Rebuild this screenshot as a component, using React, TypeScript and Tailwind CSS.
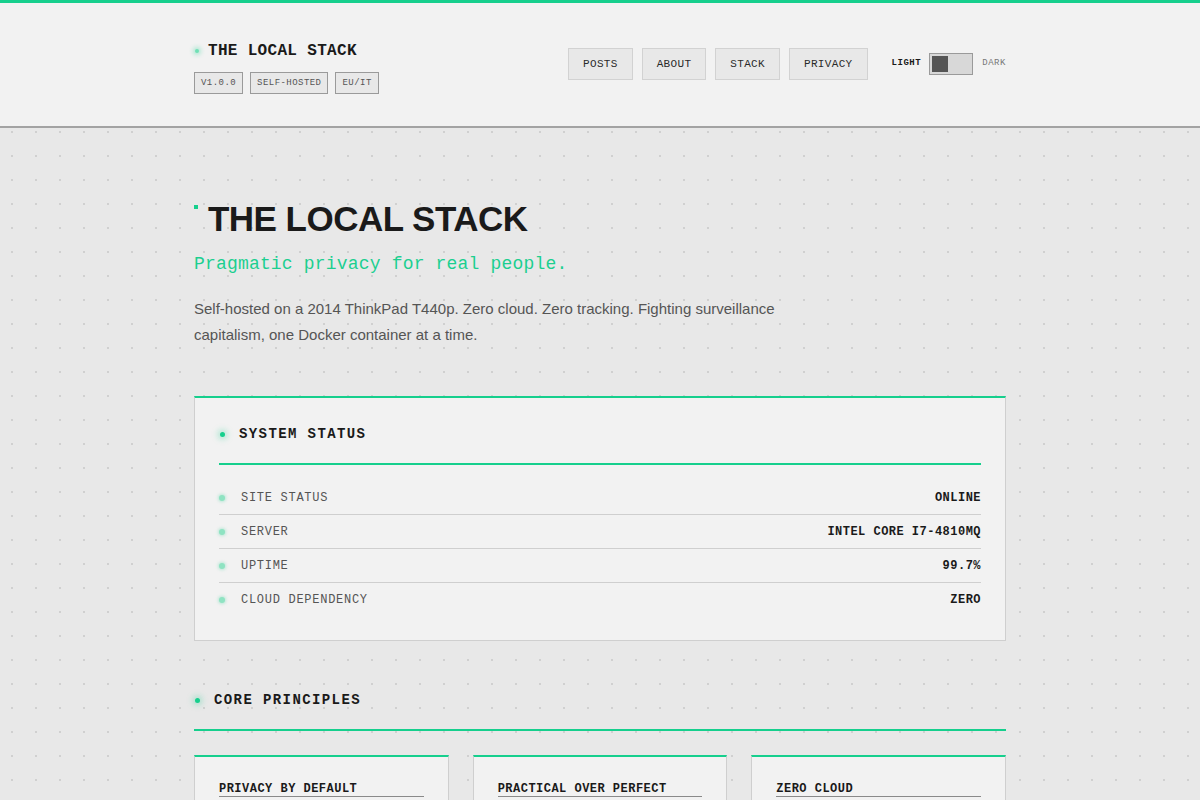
import React from "react";

const mono = "font-['Liberation_Mono','DejaVu_Sans_Mono',monospace]";
const sans = "font-['Liberation_Sans',Arial,sans-serif]";

const statusRows = [
  { label: "Site Status", value: "ONLINE" },
  { label: "Server", value: "INTEL CORE I7-4810MQ" },
  { label: "Uptime", value: "99.7%" },
  { label: "Cloud Dependency", value: "ZERO" },
];

const principles = [
  {
    title: "Privacy by default",
    text: "No analytics, no cookies, no third-party scripts. Your visit stays between you and this laptop.",
  },
  {
    title: "Practical over perfect",
    text: "Tools that real people can actually run at home, without a datacenter or a PhD.",
  },
  {
    title: "Zero cloud",
    text: "Every service runs on hardware I own, in a room I can walk into.",
  },
];

function Tag({ children }: { children: React.ReactNode }) {
  return (
    <span className={`${mono} border border-[#9a9a9a] bg-[#e8e8e8] px-[6px] py-[5px] text-[9px] leading-[10px] tracking-[0.05em] text-[#555]`}>
      {children}
    </span>
  );
}

function SectionTitle({ children }: { children: React.ReactNode }) {
  return (
    <div className="flex items-center gap-[14px] border-b-2 border-[#16cf8d] pb-[19px]">
      <span className="ml-[1px] h-[5px] w-[5px] rounded-full bg-[#16cf8d] shadow-[0_0_6px_2px_rgba(22,207,141,0.35)]" />
      <h2 className={`${mono} text-[14px] font-bold leading-5 tracking-[0.1em] text-[#1a1a1a]`}>{children}</h2>
    </div>
  );
}

export default function App() {
  return (
    <div className="min-h-screen bg-[#e8e8e8] bg-[radial-gradient(circle,#d0d0d0_1px,transparent_1.5px)] bg-[size:24px_24px]">
      <div className="h-[3px] bg-[#16cf8d]" />
      <header className="border-b-2 border-[#a3a3a3] bg-[#f2f2f2]">
        <div className="mx-auto flex max-w-[812px] items-start justify-between pt-[36px] pb-[32px]">
          <div className="flex flex-col gap-[9px]">
            <div className="flex items-center gap-[10px]">
              <span className="ml-[1px] h-[4px] w-[4px] rounded-full bg-[#6fe0b5] shadow-[0_0_4px_2px_rgba(22,207,141,0.3)]" />
              <span className={`${mono} -ml-[1px] text-[16px] font-bold leading-6 tracking-[0.02em] text-[#1a1a1a]`}>THE LOCAL STACK</span>
            </div>
            <div className="flex gap-[7px]">
              <Tag>V1.0.0</Tag>
              <Tag>SELF-HOSTED</Tag>
              <Tag>EU/IT</Tag>
            </div>
          </div>
          <div className="mt-[9px] flex items-center">
            <nav className="flex gap-[9px]">
              {["POSTS", "ABOUT", "STACK", "PRIVACY"].map((n) => (
                <a
                  key={n}
                  className={`${mono} flex h-8 items-center border border-[#d2d2d2] bg-[#e8e8e8] px-[14px] text-[11px] tracking-[0.03em] text-[#2a2a2a]`}
                >
                  {n}
                </a>
              ))}
            </nav>
            <div className="ml-6 flex items-center">
              <span className={`${mono} text-[9px] font-bold tracking-[0.06em] text-[#1a1a1a]`}>LIGHT</span>
              <div className="ml-2 flex h-[22px] w-[44px] items-center border border-[#9a9a9a] bg-[#d8d8d8] px-[2px]">
                <div className="h-[16px] w-[16px] bg-[#555]" />
              </div>
              <span className={`${mono} ml-[9px] text-[9px] tracking-[0.06em] text-[#777]`}>DARK</span>
            </div>
          </div>
        </div>
      </header>

      <main className="mx-auto max-w-[812px] pt-[71px] pb-16">
        <section>
          <div className="flex items-start gap-[10px]">
            <span className="mt-[6px] h-[4px] w-[4px] bg-[#16cf8d]" />
            <h1 className={`${sans} text-[35px] font-bold leading-[40px] tracking-[-0.015em] text-[#1a1a1a]`}>THE LOCAL STACK</h1>
          </div>
          <p className={`${mono} mt-[11px] text-[18px] leading-7 tracking-[0.01em] text-[#1ccf90]`}>Pragmatic privacy for real people.</p>
          <p className={`${sans} mt-[18px] max-w-[600px] text-[15px] leading-[26px] text-[#555]`}>
            Self-hosted on a 2014 ThinkPad T440p. Zero cloud. Zero tracking. Fighting surveillance capitalism, one Docker container at a time.
          </p>
        </section>

        <section className="mt-12 border border-t-2 border-[#cfcfcf] border-t-[#16cf8d] bg-[#f2f2f2] px-6 pt-[26px] pb-[23px]">
          <div className="flex items-center gap-[14px] border-b-2 border-[#16cf8d] pb-[19px]">
            <span className="ml-[1px] h-[5px] w-[5px] rounded-full bg-[#16cf8d] shadow-[0_0_6px_2px_rgba(22,207,141,0.35)]" />
            <h2 className={`${mono} text-[14px] font-bold leading-5 tracking-[0.1em] text-[#1a1a1a]`}>SYSTEM STATUS</h2>
          </div>
          <ul className="mt-4">
            {statusRows.map((r, i) => (
              <li
                key={r.label}
                className={`flex h-[34px] items-center justify-between ${i < statusRows.length - 1 ? "border-b border-[#cfcfcf]" : ""}`}
              >
                <div className="flex items-center gap-4">
                  <span className="h-[6px] w-[6px] rounded-full bg-[#8fe3c2] shadow-[0_0_3px_1px_rgba(22,207,141,0.25)]" />
                  <span className={`${mono} text-[12px] uppercase leading-4 tracking-[0.06em] text-[#555]`}>{r.label}</span>
                </div>
                <span className={`${mono} text-[12px] font-bold leading-4 tracking-[0.04em] text-[#1a1a1a]`}>{r.value}</span>
              </li>
            ))}
          </ul>
        </section>

        <section className="mt-[49px]">
          <SectionTitle>CORE PRINCIPLES</SectionTitle>
          <div className="mt-6 grid grid-cols-3 gap-6">
            {principles.map((p) => (
              <div key={p.title} className="border border-t-2 border-[#cfcfcf] border-t-[#16cf8d] bg-[#f2f2f2] px-6 pt-[25px] pb-6">
                <h3 className={`${mono} border-b border-[#8a8a8a] pb-0 text-[12px] font-bold uppercase leading-[14px] tracking-[0.04em] text-[#1a1a1a]`}>
                  {p.title}
                </h3>
                <p className={`${sans} mt-3 text-[14px] leading-6 text-[#555]`}>{p.text}</p>
              </div>
            ))}
          </div>
        </section>
      </main>
    </div>
  );
}
